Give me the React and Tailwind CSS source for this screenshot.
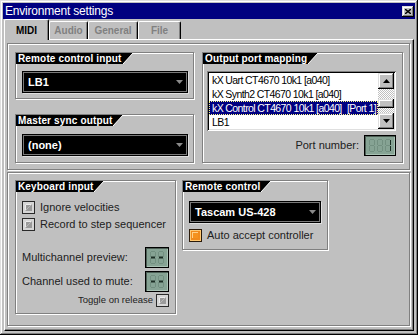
import React from 'react';

const raised =
  'shadow-[inset_-1px_-1px_0_#000,inset_1px_1px_0_#dfdfdf,inset_-2px_-2px_0_#808080,inset_2px_2px_0_#fff]';
const etched = 'border border-[#808080] shadow-[1px_1px_0_#fff,inset_1px_1px_0_#fff]';

const SEG = {
  a: [1, 0, 4, 1],
  b: [5, 1, 1, 5],
  c: [5, 7, 1, 5],
  d: [1, 12, 4, 1],
  e: [0, 7, 1, 5],
  f: [0, 1, 1, 5],
  g: [1, 6, 4, 1],
};

function Lcd({ digits, className }) {
  return (
    <div
      className={`bg-[#86a394] border border-black shadow-[inset_1px_1px_0_#4d5f55,inset_-1px_-1px_0_#a9c2b4] flex items-center justify-center gap-[2px] ${className}`}
    >
      {digits.map((lit, i) => (
        <svg key={i} width="6" height="13" viewBox="0 0 6 13">
          {Object.entries(SEG).map(([k, [x, y, w, h]]) => (
            <rect
              key={k}
              x={x}
              y={k === 'g' && lit.includes('g') ? y - 0.5 : y}
              width={w}
              height={k === 'g' && lit.includes('g') ? h + 1 : h}
              fill={lit.includes(k) ? '#1c2e24' : '#728f80'}
            />
          ))}
        </svg>
      ))}
    </div>
  );
}

function GroupLabel({ children }) {
  return (
    <div className="flex h-[11px]">
      <span className="bg-black text-white font-bold text-[10px] leading-[11px] tracking-[0.15px] pl-[2px] pr-[1px] whitespace-nowrap">
        {children}
      </span>
      <svg width="10" height="11" viewBox="0 0 10 11">
        <polygon points="0,0 10,0 0,11" fill="#000" />
        <line x1="0" y1="11" x2="10" y2="0" stroke="#fff" strokeWidth="1" />
      </svg>
    </div>
  );
}

function Dropdown({ value, className }) {
  return (
    <div
      className={`h-[22px] flex items-center justify-between bg-black border border-black shadow-[inset_0_0_0_1px_#7a7a7a,1px_1px_0_#dfdfdf] pl-[5px] pr-[4px] ${className}`}
    >
      <span className="text-white font-bold text-[11px] leading-none">{value}</span>
      <svg width="7" height="4" viewBox="0 0 7 4">
        <polygon points="0,0 7,0 3.5,4" fill="#8a8a8a" />
      </svg>
    </div>
  );
}

function GrayCheck() {
  return (
    <svg width="13" height="13" viewBox="0 0 13 13" className="shrink-0">
      <rect x="0" y="0" width="13" height="13" fill="#2a2a2a" />
      <rect x="1" y="1" width="11" height="11" fill="#d6d6d6" />
      <rect x="3" y="3" width="7" height="7" fill="#9a9a9a" />
      <polyline points="3.5,9.5 3.5,3.5 9.5,3.5" fill="none" stroke="#ececec" strokeWidth="1" />
      <line x1="4" y1="9" x2="9" y2="4" stroke="#b8b8b8" strokeWidth="1" />
    </svg>
  );
}

function OrangeCheck() {
  return (
    <svg width="13" height="13" viewBox="0 0 13 13" className="shrink-0">
      <rect x="0" y="0" width="13" height="13" fill="#2a1a0a" />
      <rect x="1" y="1" width="11" height="11" fill="#ffc872" />
      <rect x="2" y="2" width="9" height="9" fill="#f08a1c" />
      <rect x="3" y="3" width="6" height="6" fill="#ffd089" />
      <rect x="4" y="4" width="5" height="5" fill="#f5921e" />
    </svg>
  );
}

function ScrollBtn({ dir }) {
  return (
    <div className={`h-[16px] bg-[#c0c0c0] flex items-center justify-center ${raised}`}>
      <svg width="7" height="4" viewBox="0 0 7 4">
        <polygon points={dir === 'up' ? '0,4 7,4 3.5,0' : '0,0 7,0 3.5,4'} fill="#000" />
      </svg>
    </div>
  );
}

function Tab({ active, width, children }) {
  return (
    <div
      className={`${width} flex items-center justify-center bg-[#c0c0c0] border-t border-l border-white border-r border-r-black shadow-[inset_-1px_0_0_#808080] rounded-tl-[2px] rounded-tr-[2px] font-bold text-[10px] ${
        active ? 'h-[21px] -mb-px text-black' : 'h-[18px] text-[#808080]'
      }`}
    >
      {children}
    </div>
  );
}

const ports = [
  { name: 'kX Uart CT4670 10k1 [a040]' },
  { name: 'kX Synth2 CT4670 10k1 [a040]' },
  { name: 'kX Control CT4670 10k1 [a040]', port: '[Port 1]', selected: true },
  { name: 'LB1' },
];

export default function App() {
  return (
    <div
      className={`w-[418px] h-[335px] bg-[#c0c0c0] p-[3px] flex flex-col font-['Liberation_Sans',Arial,sans-serif] text-black overflow-hidden select-none shadow-[inset_-1px_-1px_0_#000,inset_1px_1px_0_#dfdfdf,inset_-2px_-2px_0_#808080,inset_2px_2px_0_#fff]`}
    >
      {/* Title bar */}
      <div className="h-[16px] shrink-0 bg-[#000080] flex items-center justify-between pl-[2px] pr-[1px]">
        <span className="text-white text-[12px] leading-[16px] tracking-[-0.2px]">Environment settings</span>
        <div className={`w-[12px] h-[11px] bg-[#c0c0c0] flex items-center justify-center ${raised}`}>
          <svg width="6" height="5" viewBox="0 0 6 5">
            <path d="M0 0L6 5M6 0L0 5" stroke="#000" strokeWidth="1.4" />
          </svg>
        </div>
      </div>

      {/* Tabs */}
      <div className="h-[20px] shrink-0 flex items-end pl-[1px] relative z-10">
        <Tab active width="w-[45px]">MIDI</Tab>
        <Tab width="w-[39px]">Audio</Tab>
        <Tab width="w-[50px]">General</Tab>
        <Tab width="w-[43px]">File</Tab>
      </div>

      {/* Tab panel */}
      <div className="ml-[1px] w-[410px] h-[292px] border-l border-t border-white border-r border-b border-r-black border-b-black shadow-[inset_-1px_-1px_0_#808080] pl-[2px] pt-[3px]">
        {/* Top frame */}
        <div className={`w-[403px] h-[127px] ${etched} pl-[7px] pt-[8px] flex gap-[8px]`}>
          <div className="w-[179px] h-[111px] flex flex-col justify-between">
            <div className={`h-[47px] ${etched}`}>
              <GroupLabel>Remote control input</GroupLabel>
              <Dropdown value="LB1" className="mt-[7px] ml-[6px] w-[166px]" />
            </div>
            <div className={`h-[49px] ${etched}`}>
              <GroupLabel>Master sync output</GroupLabel>
              <Dropdown value="(none)" className="mt-[8px] ml-[6px] w-[166px]" />
            </div>
          </div>

          <div className={`w-[201px] h-[111px] ${etched}`}>
            <GroupLabel>Output port mapping</GroupLabel>
            <div className="ml-[4px] mt-[7px] w-[189px] h-[60px] bg-white p-[2px] flex shadow-[inset_1px_1px_0_#808080,inset_-1px_-1px_0_#fff,inset_2px_2px_0_#000,inset_-2px_-2px_0_#dfdfdf]">
              <div className="flex-1 flex flex-col">
                {ports.map((p) => (
                  <div
                    key={p.name}
                    className={`h-[14px] flex items-center justify-between pl-[2px] pr-[1px] text-[10.5px] tracking-[-0.6px] leading-none whitespace-nowrap ${
                      p.selected ? 'bg-[#000080] text-white border border-dotted border-[#ffff80]' : 'border border-transparent'
                    }`}
                  >
                    <span>{p.name}</span>
                    {p.port && <span>{p.port}</span>}
                  </div>
                ))}
              </div>
              <div className="w-[16px] flex flex-col">
                <ScrollBtn dir="up" />
                <div className="flex-1 flex flex-col bg-[repeating-conic-gradient(#c0c0c0_0_25%,#fff_0_50%)] bg-[length:2px_2px]">
                  <div className="h-[10px]" />
                  <div className={`h-[9px] bg-[#c0c0c0] ${raised}`} />
                </div>
                <ScrollBtn dir="down" />
              </div>
            </div>
            <div className="ml-[4px] mt-[4px] w-[189px] flex items-center justify-end gap-[5px]">
              <span className="text-[11px] text-[#202020]">Port number:</span>
              <Lcd digits={['', '', 'bc']} className="w-[32px] h-[21px]" />
            </div>
          </div>
        </div>

        {/* Bottom frame */}
        <div className={`mt-[2px] w-[403px] h-[154px] ${etched} pl-[7px] pt-[7px] flex items-start gap-[6px]`}>
          <div className={`w-[161px] h-[134px] ${etched}`}>
            <GroupLabel>Keyboard input</GroupLabel>
            <div className="pl-[6px] pr-[6px] pt-[9px] flex flex-col">
              <div className="h-[13px] flex items-center gap-[5px]">
                <GrayCheck />
                <span className="text-[11px] text-[#202020]">Ignore velocities</span>
              </div>
              <div className="mt-[4px] h-[13px] flex items-center gap-[5px]">
                <GrayCheck />
                <span className="text-[11px] text-[#202020]">Record to step sequencer</span>
              </div>
              <div className="mt-[16px] flex items-center justify-between">
                <span className="text-[11px] text-[#202020]">Multichannel preview:</span>
                <Lcd digits={['g', 'g']} className="w-[24px] h-[21px]" />
              </div>
              <div className="mt-[3px] flex items-center justify-between">
                <span className="text-[11px] text-[#202020]">Channel used to mute:</span>
                <Lcd digits={['g', 'g']} className="w-[24px] h-[21px]" />
              </div>
              <div className="mt-[2px] h-[13px] flex items-center justify-end gap-[3px]">
                <span className="text-[9.5px] text-[#202020]">Toggle on release</span>
                <GrayCheck />
              </div>
            </div>
          </div>

          <div className={`w-[146px] h-[70px] ${etched}`}>
            <GroupLabel>Remote control</GroupLabel>
            <Dropdown value="Tascam US-428" className="mt-[9px] ml-[6px] w-[132px]" />
            <div className="mt-[6px] ml-[6px] h-[13px] flex items-center gap-[5px]">
              <OrangeCheck />
              <span className="text-[11px] text-[#202020]">Auto accept controller</span>
            </div>
          </div>
        </div>
      </div>
    </div>
  );
}
